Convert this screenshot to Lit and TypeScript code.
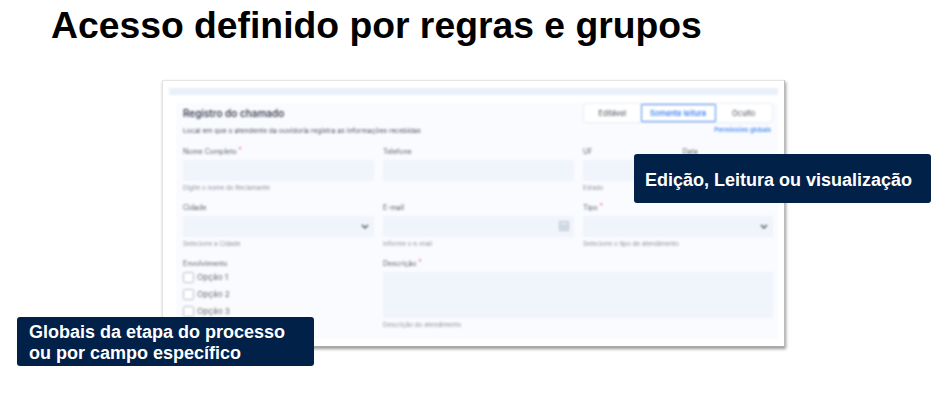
import { LitElement, html, css } from "lit";
import { customElement } from "lit/decorators.js";

@customElement("app-root")
export class AppRoot extends LitElement {
  static styles = css`
    :host { display: block; position: relative; height: 420px; overflow: hidden; background: #fff; font-family: "Liberation Sans", Arial, sans-serif; }
    h1 { margin: 0; padding: 5px 0 0 51px; font-size: 37.3px; line-height: 41px; font-weight: 700; color: #000; }
    .frame { box-sizing: border-box; width: 623px; height: 267px; margin: 34px 0 0 162px; background: #fff; border: 1px solid #e4e4e4; border-right-color: #bbb; border-bottom-color: #aaa; box-shadow: 1px 2px 3px rgba(0,0,0,.4); padding: 7px 6px 0 6px; }
    .shot { filter: blur(.85px); font-family: Inter, "Noto Sans", sans-serif; }
    .topbar { height: 7px; background: #e9f0f9; }
    .panel { margin: 8px 0 0 7px; height: 236px; background: #fafbff; padding: 0 6px 0 7px; box-sizing: border-box; }
    .head { display: flex; justify-content: space-between; height: 43px; }
    .title { font-size: 10px; font-weight: 500; color: #23283a; line-height: 12px; margin-top: 4px; }
    .sub { font-size: 6.85px; color: #4c5260; margin-top: 7px; line-height: 9px; white-space: nowrap; }
    .right { display: flex; flex-direction: column; align-items: flex-end; flex: none; }
    .toggle { display: flex; width: 188px; height: 18px; margin-top: 1px; background: #fff; border-radius: 2px; box-shadow: 0 0 2px rgba(70,90,130,.3); }
    .toggle span { flex: 1; display: flex; align-items: center; justify-content: center; font-size: 7.5px; color: #474c55; box-sizing: border-box; }
    .toggle .on { flex: 0 0 75px; border: 1px solid #4a8af0; color: #2a74ee; font-weight: 500; border-radius: 1px; }
    .link { font-size: 6.1px; font-weight: 500; color: #2f7bf0; margin: 3px 1px 0 0; line-height: 9px; }
    .grid { display: grid; grid-template-columns: 191px 191px 190px; column-gap: 9px; }
    .field { height: 56px; }
    .lab { font-size: 7px; line-height: 9px; color: #5b6069; height: 14px; padding-top: 1px; box-sizing: border-box; white-space: nowrap; }
    .lab b { color: #e5282d; font-weight: 400; font-size: 6px; line-height: 0; vertical-align: 2px; }
    .input { height: 20.5px; background: #f0f4fb; display: flex; align-items: center; justify-content: flex-end; padding-right: 5px; box-sizing: border-box; }
    .hint { font-size: 6.3px; line-height: 8px; color: #8d919b; margin-top: 3px; white-space: nowrap; }
    .split { display: grid; grid-template-columns: 1fr 1fr; column-gap: 9px; }
    .area { height: 46px; background: #f0f4fb; }
    .desc { grid-column: 2 / 4; }
    .opts { display: flex; flex-direction: column; gap: 5px; margin-top: -1px; }
    .opt { display: flex; align-items: center; gap: 3px; font-size: 8.2px; line-height: 12px; color: #666b75; }
    .box { width: 11px; height: 11px; box-sizing: border-box; border: 1px solid #b5bccc; border-radius: 1.5px; background: #fff; }
    svg { display: block; }
    .call { position: absolute; background: #012149; color: #fff; font-weight: 700; font-size: 18px; line-height: 21px; border-radius: 3px; box-sizing: border-box; white-space: nowrap; }
    .c1 { left: 634px; top: 154px; width: 297px; height: 49px; padding: 16px 0 0 11px; }
    .c2 { left: 17px; top: 317px; width: 297px; height: 49px; padding: 5px 0 0 12px; }
  `;

  private chev() {
    return html`<svg width="8" height="5" viewBox="0 0 8 5"><path d="M1 1l3 3 3-3" fill="none" stroke="#4a505c" stroke-width="1.4"/></svg>`;
  }

  render() {
    return html`
      <h1>Acesso definido por regras e grupos</h1>
      <div class="frame">
        <div class="shot">
          <div class="topbar"></div>
          <div class="panel">
            <div class="head">
              <div>
                <div class="title">Registro do chamado</div>
                <div class="sub">Local em que o atendente da ouvidoria registra as informações recebidas</div>
              </div>
              <div class="right">
                <div class="toggle"><span>Editável</span><span class="on">Somente leitura</span><span>Oculto</span></div>
                <div class="link">Permissões globais</div>
              </div>
            </div>
            <div class="grid">
              <div class="field"><div class="lab">Nome Completo <b>*</b></div><div class="input"></div><div class="hint">Digite o nome do Reclamante</div></div>
              <div class="field"><div class="lab">Telefone</div><div class="input"></div></div>
              <div class="field split">
                <div><div class="lab">UF</div><div class="input"></div><div class="hint">Estado</div></div>
                <div><div class="lab">Data</div><div class="input"></div></div>
              </div>
              <div class="field"><div class="lab">Cidade</div><div class="input">${this.chev()}</div><div class="hint">Selecione a Cidade</div></div>
              <div class="field"><div class="lab">E-mail</div><div class="input">
                <svg width="10" height="10" viewBox="0 0 10 10"><rect x=".5" y=".5" width="9" height="9" fill="#dfe6f0" stroke="#bcc6d4"/><path d="M1 5h8M3 7.5h4" stroke="#aab5c5" stroke-width=".8"/></svg>
              </div><div class="hint">Informe o e-mail</div></div>
              <div class="field"><div class="lab">Tipo <b>*</b></div><div class="input">${this.chev()}</div><div class="hint">Selecione o tipo de atendimento</div></div>
              <div class="field">
                <div class="lab">Envolvimento</div>
                <div class="opts">
                  <div class="opt"><span class="box"></span>Opção 1</div>
                  <div class="opt"><span class="box"></span>Opção 2</div>
                  <div class="opt"><span class="box"></span>Opção 3</div>
                </div>
              </div>
              <div class="field desc"><div class="lab">Descrição <b>*</b></div><div class="area"></div><div class="hint">Descrição do atendimento</div></div>
            </div>
          </div>
        </div>
      </div>
      <div class="call c1">Edição, Leitura ou visualização</div>
      <div class="call c2">Globais da etapa do processo<br />ou por campo específico</div>
    `;
  }
}
